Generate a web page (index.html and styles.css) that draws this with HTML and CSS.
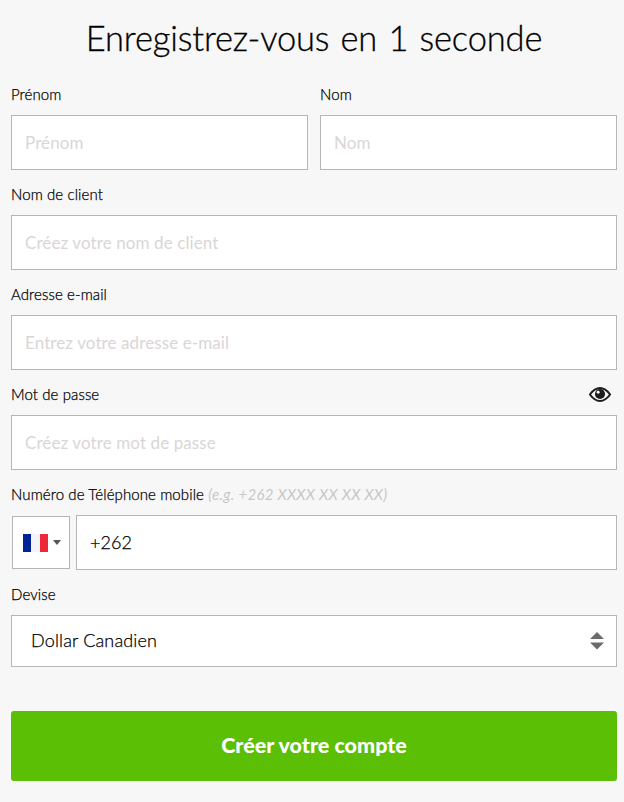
FILE: index.html
```html
<!DOCTYPE html>
<html lang="fr">
<head>
  <meta charset="UTF-8" />
  <meta name="viewport" content="width=device-width, initial-scale=1.0" />
  <title>Enregistrez-vous en 1 seconde</title>
  <link rel="stylesheet" href="styles.css">
</head>
<body>
  <form class="signup">
    <h1>Enregistrez-vous en 1 seconde</h1>

    <!-- Name row -->
    <div class="name-row">
      <div class="field">
        <label for="firstName">Prénom</label>
        <input type="text" id="firstName" placeholder="Prénom">
      </div>
      <div class="field">
        <label for="lastName">Nom</label>
        <input type="text" id="lastName" placeholder="Nom">
      </div>
    </div>

    <div class="field">
      <label for="username">Nom de client</label>
      <input type="text" id="username" placeholder="Créez votre nom de client">
    </div>

    <div class="field">
      <label for="email">Adresse e-mail</label>
      <input type="text" id="email" placeholder="Entrez votre adresse e-mail">
    </div>

    <!-- Password with eye toggle -->
    <div class="field">
      <div class="label-row">
        <label for="password">Mot de passe</label>
        <svg class="eye" width="22" height="15" viewBox="0 0 24 16">
          <path d="M1 8 C5 2.5 8.5 1 12 1 C15.5 1 19 2.5 23 8 C19 13.500 15.500 15 12 15 C8.500 15 5 13.500 1 8 Z" fill="none" stroke="#1d1d1d" stroke-width="2.200"/>
          <circle cx="12" cy="7.500" r="5.500" fill="#1d1d1d"/>
          <circle cx="10" cy="5.500" r="1.600" fill="#fff"/>
        </svg>
      </div>
      <input type="text" id="password" placeholder="Créez votre mot de passe">
    </div>

    <!-- Phone -->
    <div class="field">
      <label for="phone">Numéro de Téléphone mobile <em>(e.g. +262 XXXX XX XX XX)</em></label>
      <div class="phone-row">
        <div class="country">
          <span class="flag"><i class="blue"></i><i class="white"></i><i class="red"></i></span>
          <span class="caret"></span>
        </div>
        <input type="text" id="phone" class="filled" value="+262">
      </div>
    </div>

    <div class="field">
      <label for="currency">Devise</label>
      <div class="select-box">
        <select id="currency">
          <option>Dollar Canadien</option>
        </select>
        <svg class="updown" width="14" height="18" viewBox="0 0 14 18">
          <path d="M7 0 L14 7 L0 7 Z M0 10.500 L14 10.500 L7 17.500 Z" fill="#6b6b6b"/>
        </svg>
      </div>
    </div>

    <button type="button" class="submit">Créer votre compte</button>
  </form>
</body>
</html>
```

FILE: styles.css
```css
/* Global styles */
body {
  margin: 0;
  background: #f7f7f7;
  color: #000;
  font-family: Lato, "Liberation Sans", sans-serif;
}
.signup {
  padding: 0 7px 0 11px;
  height: 802px;
  box-sizing: border-box;
  overflow: hidden;
}
h1 {
  margin: 0;
  height: 85px;
  padding-top: 16px;
  box-sizing: border-box;
  font-size: 34.5px;
  line-height: 44px;
  font-weight: 300;
  color: #000;
  text-align: center;
  letter-spacing: -0.15px;
  word-spacing: 2px;
  -webkit-text-stroke: 0.3px #000;
}
/* Fields */
.name-row {
  display: grid;
  grid-template-columns: 297px 297px;
  gap: 12px;
}
.field {
  margin-bottom: 15px;
}
.field label {
  display: block;
  height: 30px;
  font-size: 15px;
  font-weight: 300;
  line-height: 19px;
  letter-spacing: 0.1px;
  -webkit-text-stroke: 0.25px #000;
}
.field em {
  font-weight: 400;
  color: #c8c8c8;
  letter-spacing: 0.3px;
  -webkit-text-stroke: 0;
}
.label-row {
  display: flex;
  justify-content: space-between;
  height: 30px;
}
.eye {
  margin: 2px 6px 0 0;
}
input {
  display: block;
  width: 100%;
  height: 55px;
  box-sizing: border-box;
  padding: 0 13px;
  border: 1px solid #b5b5b5;
  background: #fff;
  font-family: inherit;
  font-size: 17px;
  letter-spacing: 0.1px;
  color: #000;
  outline: none;
}
input::placeholder {
  color: #dad6d6;
  opacity: 1;
}
/* Phone row */
.phone-row {
  display: flex;
  align-items: center;
  gap: 6px;
}
.country {
  flex: 0 0 58px;
  height: 53px;
  margin-left: 1px;
  box-sizing: border-box;
  border: 1px solid #b5b5b5;
  background: #fff;
  display: flex;
  align-items: center;
  padding-left: 10px;
  gap: 5px;
}
.flag {
  display: flex;
  width: 25px;
  height: 18px;
}
.flag i {
  flex: 1;
}
.flag .blue { background: #002395; }
.flag .white { background: #f4f4f8; }
.flag .red { background: #ed2939; }
.caret {
  border-left: 4px solid transparent;
  border-right: 4px solid transparent;
  border-top: 5px solid #555;
}
.phone-row input {
  flex: 1;
  min-width: 0;
}
input.filled {
  font-size: 18px;
  font-weight: 300;
  padding-bottom: 2px;
  -webkit-text-stroke: 0.25px #000;
}
/* Currency select */
.select-box {
  position: relative;
}
select {
  display: block;
  width: 100%;
  height: 52px;
  box-sizing: border-box;
  padding: 0 19px 2px;
  border: 1px solid #b5b5b5;
  border-radius: 0;
  background: #fff;
  font-family: inherit;
  font-size: 18px;
  font-weight: 300;
  letter-spacing: 0.15px;
  color: #000;
  -webkit-text-stroke: 0.25px #000;
  appearance: none;
}
.updown {
  position: absolute;
  right: 13px;
  top: 17px;
}
/* Submit */
.submit {
  display: block;
  width: 100%;
  height: 70px;
  margin-top: 44px;
  padding-bottom: 4px;
  border: none;
  border-radius: 3px;
  background: #5bbf06;
  color: #fff;
  font-family: inherit;
  font-size: 21.5px;
  font-weight: 900;
}
```
